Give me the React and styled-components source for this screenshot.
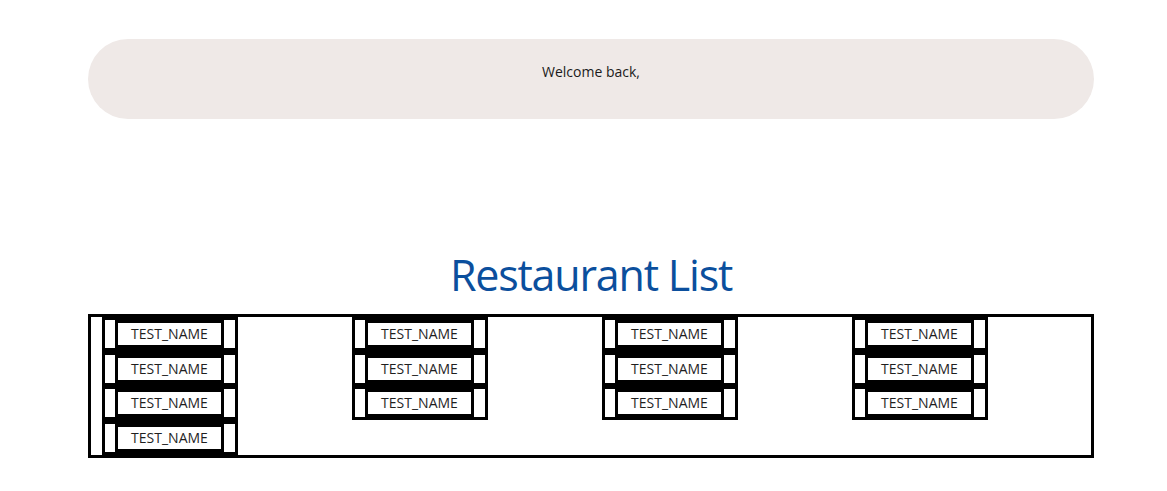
import React from 'react';
import styled, { createGlobalStyle } from 'styled-components';

const GlobalStyle = createGlobalStyle`
  body {
    margin: 0;
    background: #fff;
    font-family: "Segoe UI", "Open Sans", "Noto Sans", sans-serif;
  }
`

const Page = styled.div`
  width: 1006px;
  padding: 39px 0 30px 88px;
`

const Banner = styled.div`
  height: 80px;
  box-sizing: border-box;
  padding-top: 23px;
  border-radius: 40px;
  background: #efe9e7;
  text-align: center;
  font-size: 14px;
  line-height: 20px;
  color: #1b1b1b;
`

const Title = styled.h1`
  margin: 129px 0 13px;
  text-align: center;
  font-size: 43px;
  line-height: 53px;
  font-weight: 400;
  letter-spacing: -1.2px;
  color: #0b4f9d;
`

const List = styled.div`
  display: grid;
  grid-template-columns: repeat(4, 250px);
  align-items: start;
  border: 3px solid #000;
`

const Cell = styled.div`
  padding-left: 11px;
`

const Column = styled.div`
  width: 130px;
  display: flex;
  flex-direction: column;
  gap: 6.5px;
  padding: 3px;
  background: #000;
`

const Row = styled.div`
  height: 28px;
  display: flex;
  align-items: center;
  gap: 3px;
`

const Strip = styled.div`
  width: ${p => p.w}px;
  align-self: stretch;
  background: #fff;
`

const Name = styled.div`
  width: 103px;
  height: 22px;
  background: #fff;
  font-size: 14px;
  line-height: 22px;
  text-align: center;
  color: #1f1f1f;
`

const columns = [4, 3, 3, 3]

const App = () => (
  <>
    <GlobalStyle />
    <Page>
      <Banner>Welcome back,</Banner>
      <Title>Restaurant List</Title>
      <List>
        {columns.map((count, i) => (
          <Cell key={i}>
            <Column>
              {Array.from({ length: count }).map((_, j) => (
                <Row key={j}>
                  <Strip w={10} />
                  <Name>TEST_NAME</Name>
                  <Strip w={11} />
                </Row>
              ))}
            </Column>
          </Cell>
        ))}
      </List>
    </Page>
  </>
)

export default App
